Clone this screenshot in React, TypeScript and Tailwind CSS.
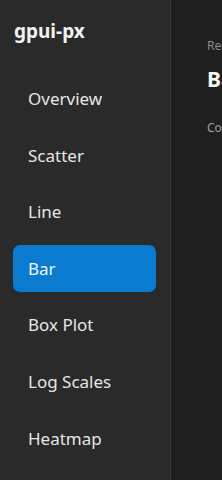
import { useState } from 'react'

const pages = ['Overview', 'Scatter', 'Line', 'Bar', 'Box Plot', 'Log Scales', 'Heatmap']

export default function App() {
  const [active, setActive] = useState('Bar')

  return (
    <div
      className="flex h-[480px] w-[222px] overflow-hidden bg-[#1f1f1f] text-white"
      style={{ fontFamily: '"Noto Sans", "Open Sans", sans-serif' }}
    >
      {/* Sidebar */}
      <aside className="flex w-[171px] shrink-0 flex-col border-r border-[#383838] bg-[#2a2a2a] px-[13px]">
        <h1 className="mt-[18px] h-[26px] pl-px text-[19px] font-bold leading-[26px] text-[#f2f2f2]">gpui-px</h1>
        <nav className="mt-[31px] flex flex-col gap-[9.6px]">
          {pages.map(p => (
            <button
              key={p}
              onClick={() => setActive(p)}
              className={
                'h-[47px] w-[143px] rounded-[7px] pl-[15px] text-left text-[17px] leading-[47px] ' +
                (active === p ? 'bg-[#0a7bd0] text-[#eef6ff]' : 'text-[#e6e6e6]')
              }
            >
              {p}
            </button>
          ))}
        </nav>
      </aside>

      {/* Main */}
      <main className="flex min-w-0 flex-1 flex-col pl-[36px]">
        <p className="mt-[38px] whitespace-nowrap text-[12px] leading-[16px] text-[#8c8c8c]">Renderer: GPUI</p>
        <h2 className="mt-[11px] whitespace-nowrap text-[21px] font-bold leading-[28px] text-[#f5f5f5]">Bar Chart</h2>
        <p className="mt-[27px] whitespace-nowrap text-[12px] leading-[16px] text-[#a0a0a0]">Compare categories</p>
      </main>
    </div>
  )
}
